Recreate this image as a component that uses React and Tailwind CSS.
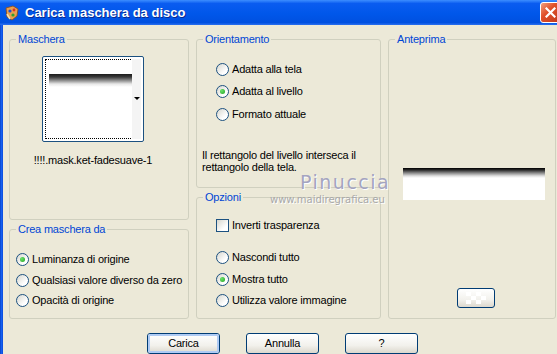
import React from 'react';

const font = { fontFamily: '"Liberation Sans", Arial, sans-serif' };

function Group({ title, className, children }) {
  return (
    <div className={`relative rounded-[3px] border border-[#D0D0BF] ${className}`}>
      <span className="absolute -top-[8px] left-[6px] bg-[#ECE9D8] px-[2px] leading-[14px] text-[#0046D5]">
        {title}
      </span>
      {children}
    </div>
  );
}

function Radio({ checked, label, h }) {
  return (
    <div className={`flex items-center gap-[3px] whitespace-nowrap ${h}`}>
      <span className="flex h-[13px] w-[13px] shrink-0 items-center justify-center rounded-full border border-[#1C5180] bg-[linear-gradient(135deg,#D6D6CE,#FFFFFF_70%)]">
        {checked && <span className="h-[5px] w-[5px] rounded-full bg-[radial-gradient(circle_at_35%_35%,#6BE36B,#21A121)]" />}
      </span>
      <span className="leading-[13px]">{label}</span>
    </div>
  );
}

function Checkbox({ label }) {
  return (
    <div className="flex h-[18px] items-center gap-[3px] whitespace-nowrap">
      <span className="h-[13px] w-[13px] shrink-0 border border-[#1C5180] bg-[linear-gradient(135deg,#D6D6CE,#FFFFFF_70%)]" />
      <span className="leading-[13px]">{label}</span>
    </div>
  );
}

function XpButton({ label, isDefault }) {
  return (
    <button className="h-[21px] w-[73px] shrink-0 rounded-[3px] border border-[#003C74] bg-[linear-gradient(180deg,#FFFFFF,#F2F1EC_60%,#DCD8CD)] p-0 text-[11px] text-black">
      <span
        className={`flex h-full w-full items-center justify-center rounded-[2px] ${
          isDefault ? 'border-2 border-[#AFCBF4]' : ''
        }`}
      >
        {label}
      </span>
    </button>
  );
}

function AppIcon() {
  return (
    <svg width="16" height="16" viewBox="0 0 16 16">
      <path d="M2 3 L9 1 L14 4 L13 11 L8 15 L3 12 Z" fill="#E8A050" stroke="#8A4A1A" strokeWidth="0.8" />
      <circle cx="6" cy="6" r="1.6" fill="#2050D0" />
      <circle cx="10" cy="5" r="1.4" fill="#E03020" />
      <circle cx="9" cy="10" r="1.6" fill="#30A030" />
      <path d="M3 9 L6 14" stroke="#F4E0B0" strokeWidth="1.5" />
    </svg>
  );
}

function CloseButton() {
  return (
    <div className="ml-auto mr-[-4px] flex h-[21px] w-[21px] shrink-0 items-center justify-center rounded-[3px] border border-white bg-[linear-gradient(135deg,#F0A080,#E0502A_40%,#C0381A)]">
      <svg width="11" height="11" viewBox="0 0 11 11">
        <path d="M1.5 1.5 L9.5 9.5 M9.5 1.5 L1.5 9.5" stroke="white" strokeWidth="2.2" strokeLinecap="square" />
      </svg>
    </div>
  );
}

function Checker() {
  return (
    <svg width="20" height="12" viewBox="0 0 20 12">
      <rect x="0" y="0" width="5" height="4" fill="#FFFFFF" />
      <rect x="10" y="0" width="5" height="4" fill="#FFFFFF" />
      <rect x="5" y="4" width="5" height="4" fill="#FFFFFF" />
      <rect x="15" y="4" width="5" height="4" fill="#FFFFFF" />
      <rect x="0" y="8" width="5" height="4" fill="#FFFFFF" />
      <rect x="10" y="8" width="5" height="4" fill="#FFFFFF" />
    </svg>
  );
}

export default function App() {
  return (
    <div className="relative h-[354px] w-[557px] overflow-hidden bg-[#ECE9D8] text-[11px] text-black" style={font}>
      {/* barra del titolo */}
      <div className="flex h-[25px] items-center overflow-hidden bg-[linear-gradient(180deg,#3D8EFF_0%,#0A5CF0_14%,#0057EA_55%,#0050E0_90%,#2A70F0_100%)] pl-[4px]">
        <AppIcon />
        <span className="ml-[5px] text-[13px] font-bold text-white [text-shadow:1px_1px_0_#0A2A90]">
          Carica maschera da disco
        </span>
        <CloseButton />
      </div>

      <div className="flex h-[329px] tracking-[-0.2px]">
        <div className="w-[3px] bg-[linear-gradient(90deg,#0842C8,#1660F0,#0A4ADA)]" />

        <div className="flex flex-1 flex-col">
          <div className="flex gap-[7px] pl-[6px] pt-[14px]">
            {/* colonna sinistra */}
            <div className="flex w-[180px] flex-col gap-[9px]">
              <Group title="Maschera" className="h-[181px]">
                <div className="ml-[13px] mt-[16px] flex w-[140px] flex-col items-center">
                  <div className="relative h-[86px] w-[102px] rounded-[2px] border border-[#1C5180] bg-white p-[2px]">
                    <div className="h-full w-full border border-dotted border-black pl-[3px] pt-[14px]">
                      <div className="h-[13px] w-[83px] bg-[linear-gradient(180deg,#1A1A1A_0px,#3A3A3A_3px,#9A9A9A_7px,#E8E8E8_10px,#FFFFFF_13px)]" />
                    </div>
                    <div className="absolute right-[2px] top-[2px] h-[80px] w-[9px] bg-[#F4F4F4]" />
                    <svg className="absolute right-[3px] top-[40px]" width="6" height="4" viewBox="0 0 6 4">
                      <path d="M0 0 H6 L3 3 Z" fill="black" />
                    </svg>
                  </div>
                  <span className="mt-[12px] leading-[13px]">!!!!.mask.ket-fadesuave-1</span>
                </div>
              </Group>

              <Group title="Crea maschera da" className="h-[90px]">
                <div className="mt-[19px] flex flex-col pl-[6px]">
                  <Radio checked label="Luminanza di origine" h="h-[21px]" />
                  <Radio label="Qualsiasi valore diverso da zero" h="h-[20px]" />
                  <Radio label="Opacità di origine" h="h-[21px]" />
                </div>
              </Group>
            </div>

            {/* colonna centrale */}
            <div className="flex w-[185px] flex-col gap-[9px]">
              <Group title="Orientamento" className="h-[149px]">
                <div className="mt-[18px] flex flex-col pl-[19px]">
                  <Radio label="Adatta alla tela" h="h-[22px]" />
                  <Radio checked label="Adatta al livello" h="h-[23px]" />
                  <Radio label="Formato attuale" h="h-[22px]" />
                </div>
                <p className="mt-[24px] whitespace-nowrap pl-[5px] leading-[12px]">
                  Il rettangolo del livello interseca il
                  <br />
                  rettangolo della tela.
                </p>
              </Group>

              <Group title="Opzioni" className="h-[122px]">
                <div className="mt-[18px] flex flex-col pl-[19px]">
                  <Checkbox label="Inverti trasparenza" />
                  <div className="mt-[13px] flex flex-col">
                    <Radio label="Nascondi tutto" h="h-[21px]" />
                    <Radio checked label="Mostra tutto" h="h-[22px]" />
                    <Radio label="Utilizza valore immagine" h="h-[21px]" />
                  </div>
                </div>
              </Group>
            </div>

            {/* colonna destra */}
            <Group title="Anteprima" className="h-[280px] w-[168px]">
              <div className="ml-[14px] mt-[128px] h-[32px] w-[142px] bg-[linear-gradient(180deg,#000000_0px,#2A2A2A_2px,#8A8A8A_5px,#E0E0E0_8px,#FFFFFF_10px)]" />
              <div className="ml-[68px] mt-[88px] flex h-[20px] w-[38px] items-center justify-center rounded-[3px] border border-[#003C74] bg-[linear-gradient(180deg,#FFFFFF,#F2F1EC_60%,#DCD8CD)]">
                <Checker />
              </div>
            </Group>
          </div>

          {/* pulsanti */}
          <div className="mt-[14px] flex gap-[26px] pl-[144px]">
            <XpButton label="Carica" isDefault />
            <XpButton label="Annulla" />
            <XpButton label="?" />
          </div>
        </div>
      </div>

      {/* filigrana */}
      <span
        className="absolute left-[300px] top-[168px] text-[19px] tracking-[1.5px] text-[#A4A4C0] [text-shadow:1px_1px_0_#FFFFFF]"
        style={{ fontFamily: '"DejaVu Sans", Verdana, sans-serif' }}
      >
        Pinuccia
      </span>
      <span
        className="absolute left-[270px] top-[192px] text-[10px] text-[#A8A8A8] [text-shadow:1px_1px_0_#FFFFFF]"
        style={{ fontFamily: '"DejaVu Sans", Verdana, sans-serif' }}
      >
        www.maidiregrafica.eu
      </span>
    </div>
  );
}
